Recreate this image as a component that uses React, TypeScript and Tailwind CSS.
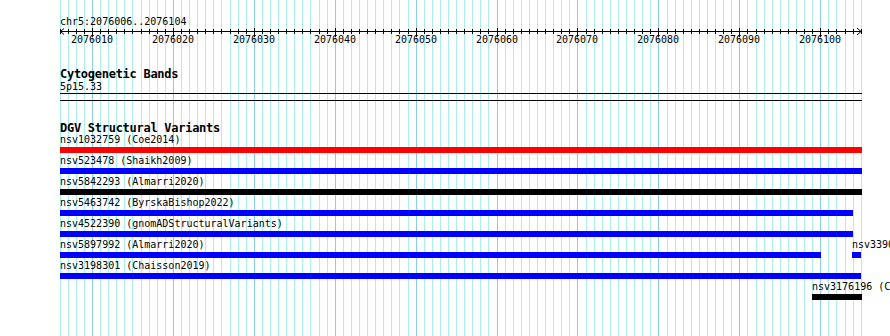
import React from "react";

const X = (k: number) => Math.round(59.6 + k * 8.092);

type Feat = { label: string; x1: number; x2: number; color: string };
const rows: Feat[][] = [
  [{ label: "nsv1032759 (Coe2014)", x1: 60, x2: 862, color: "#ff0000" }],
  [{ label: "nsv523478 (Shaikh2009)", x1: 60, x2: 862, color: "#0000ff" }],
  [{ label: "nsv5842293 (Almarri2020)", x1: 60, x2: 862, color: "#000000" }],
  [{ label: "nsv5463742 (ByrskaBishop2022)", x1: 60, x2: 853, color: "#0000ff" }],
  [{ label: "nsv4522390 (gnomADStructuralVariants)", x1: 60, x2: 853, color: "#0000ff" }],
  [
    { label: "nsv5897992 (Almarri2020)", x1: 60, x2: 821, color: "#0000ff" },
    { label: "nsv3390464 (Chaisson2019)", x1: 852, x2: 861, color: "#0000ff" },
  ],
  [{ label: "nsv3198301 (Chaisson2019)", x1: 60, x2: 861, color: "#0000ff" }],
  [{ label: "nsv3176196 (Chaisson2019)", x1: 812, x2: 862, color: "#000000" }],
];

function Grid() {
  const lines = [];
  for (let k = 0; k <= 99; k++) {
    const major = (k - 4) % 10 === 0;
    lines.push(
      <line
        key={k}
        x1={X(k) + 0.5}
        x2={X(k) + 0.5}
        y1={0}
        y2={336}
        stroke={major ? "#88ccee" : "#aaeeee"}
        strokeWidth={1}
      />
    );
  }
  return (
    <svg className="absolute left-0 top-0" width={890} height={336} shapeRendering="crispEdges">
      {lines}
    </svg>
  );
}

function Ruler() {
  const ticks = [];
  for (let k = 0; k <= 99; k++) {
    const major = (k - 4) % 10 === 0;
    const x = X(k) - 60 + 0.5;
    ticks.push(
      <line key={k} x1={x} x2={x} y1={major ? 0 : 1} y2={major ? 9 : 6} stroke="#000" strokeWidth={1} />
    );
  }
  return (
    <svg width={802} height={6} className="block overflow-visible" shapeRendering="crispEdges">
      <line x1={0} x2={802} y1={3.5} y2={3.5} stroke="#000" strokeWidth={1} />
      {ticks}
      <polyline points="4,0.5 0.5,3.5 4,6.5" fill="none" stroke="#000" strokeWidth={1} shapeRendering="auto" />
      <polyline points="797,0 801,3.5 797,7" fill="none" stroke="#000" strokeWidth={1} shapeRendering="auto" />
    </svg>
  );
}

export default function App() {
  const majors = [4, 14, 24, 34, 44, 54, 64, 74, 84, 94];
  return (
    <div className="relative w-[890px] h-[336px] overflow-hidden bg-white text-black font-['DejaVu_Sans_Mono',monospace]">
      <Grid />
      <div className="relative ml-[60px] w-[802px]">
        <div className="pt-[16px] text-[10px] leading-[12px] whitespace-nowrap">chr5:2076006..2076104</div>
        <Ruler />
        <div className="relative h-[12px] text-[10px] leading-[12px]">
          {majors.map((k) => (
            <span
              key={k}
              className="absolute top-0 -translate-x-1/2 whitespace-nowrap"
              style={{ left: X(k) - 60 }}
            >
              {2076006 + k}
            </span>
          ))}
        </div>

        <div className="mt-[22px] text-[12px] leading-[12px] font-bold tracking-[-0.27px] whitespace-nowrap">Cytogenetic Bands</div>
        <div className="mt-px text-[10px] leading-[12px]">5p15.33</div>
        <div className="h-px bg-black" />
        <div className="mt-[6px] h-px bg-black" />

        <div className="mt-[21px] text-[12px] leading-[12px] font-bold tracking-[-0.27px] whitespace-nowrap">DGV Structural Variants</div>
        <div className="flex flex-col">
          {rows.map((row, i) => (
            <div key={i} className="relative h-[21px]">
              {row.map((f, j) => (
                <div key={j} className="absolute top-0" style={{ left: f.x1 - 60 }}>
                  <div className="h-[12px] text-[10px] leading-[12px] whitespace-nowrap">{f.label}</div>
                  <div className="mt-px h-[6px]" style={{ width: f.x2 - f.x1, background: f.color }} />
                </div>
              ))}
            </div>
          ))}
        </div>
      </div>
    </div>
  );
}
